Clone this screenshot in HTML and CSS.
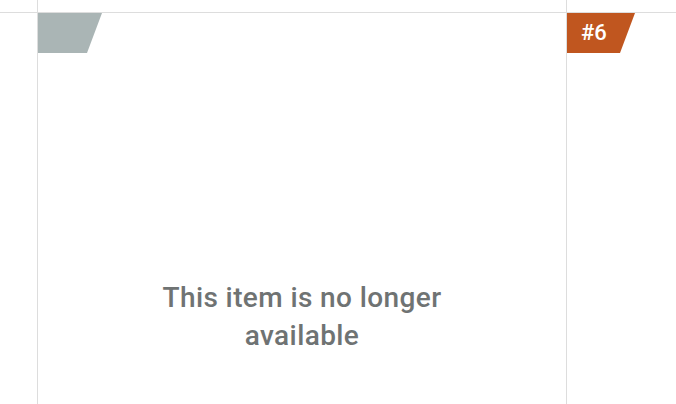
FILE: index.html
```html
<!DOCTYPE html>
<html>
<head>
<meta charset="utf-8">
<title>Item unavailable</title>
<link rel="stylesheet" href="styles.css">
</head>
<body>
<div class="row row_top">
	<div class="cell cell_edge"></div>
	<div class="cell cell_main"></div>
	<div class="cell cell_side"></div>
</div>
<div class="row">
	<div class="cell cell_edge"></div>
	<div class="cell cell_main">
		<div class="rank rank_off"></div>
		<p class="gone">This item is no longer available</p>
	</div>
	<div class="cell cell_side">
		<div class="rank rank_on">#6</div>
	</div>
</div>
</body>
</html>
```

FILE: styles.css
```css
html,body,div,p {margin: 0;padding: 0;}
body {background: #fff;font-family: Roboto, "Open Sans", "Liberation Sans", sans-serif;overflow: hidden;}
.row {display: grid;grid-template-columns: 37px 530px 1fr;height: 391px;}
.row_top {height: 12px;border-bottom: 1px solid #dddddd;}
.cell_main {border-left: 1px solid #dddddd;border-right: 1px solid #dddddd;}
.rank {height: 40px;clip-path: polygon(0 0, 100% 0, calc(100% - 15px) 100%, 0 100%);color: #fff;font-size: 22px;font-weight: 500;line-height: 40px;}
.rank_off {width: 64px;background: #aab5b5;}
.rank_on {width: 68px;background: #c0561f;padding-left: 14px;box-sizing: border-box;}
.gone {width: 340px;margin: 226px auto 0;text-align: center;color: #6f7373;font-size: 28px;font-weight: 500;letter-spacing: 0.4px;line-height: 38px;}
```
